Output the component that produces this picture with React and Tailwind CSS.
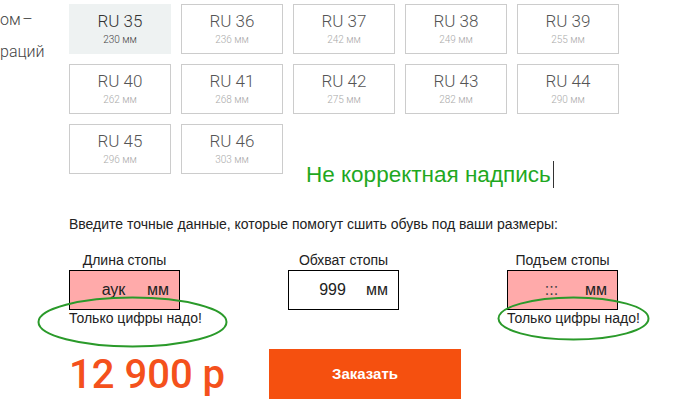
import React from "react";

const sizes = [
  ["RU 35", "230"],
  ["RU 36", "236"],
  ["RU 37", "242"],
  ["RU 38", "249"],
  ["RU 39", "255"],
  ["RU 40", "262"],
  ["RU 41", "268"],
  ["RU 42", "275"],
  ["RU 43", "282"],
  ["RU 44", "290"],
  ["RU 45", "296"],
  ["RU 46", "303"],
];

function Tile({ ru, mm, active }) {
  return (
    <div
      className={
        "h-[50px] flex flex-col items-center border " +
        (active ? "bg-[#eef2f2] border-[#eef2f2]" : "bg-white border-[#cccccc]")
      }
    >
      <div
        className={
          "text-[17px] leading-[20px] mt-[6px] font-light " +
          (active ? "text-[#333]" : "text-[#555]")
        }
      >
        {ru}
      </div>
      <div
        className={
          "text-[10px] leading-[12px] mt-[3px] font-light " +
          (active ? "text-[#444]" : "text-[#aaa]")
        }
      >
        {mm} мм
      </div>
    </div>
  );
}

function Field({ label, value, error, dots }) {
  return (
    <div className="w-[111px] flex flex-col">
      <div className="text-center text-[14px] leading-[16px] text-[#222] h-[16px]">{label}</div>
      <div
        className={
          "mt-[2px] h-[40px] border border-black flex items-center text-[16px] leading-[18px] text-[#222] " +
          (error ? "bg-[#ffaaaa]" : "bg-white")
        }
      >
        <span className={"pl-[10px] w-[77px] text-center " + (dots ? "text-[#444]" : "")}>{value}</span>
        <span>мм</span>
      </div>
      <div className="h-[16px] text-[14px] leading-[16px] text-[#222] whitespace-nowrap">
        {error ? "Только цифры надо!" : ""}
      </div>
    </div>
  );
}

export default function App() {
  return (
    <div
      className="relative w-[697px] h-[408px] bg-white overflow-hidden"
      style={{ fontFamily: "'Liberation Sans', Arial, sans-serif" }}
    >
      <div className="flex">
        <div className="w-[69px] pt-[4px] text-[16px] leading-[32px] text-[#444] font-['Roboto',sans-serif] font-light">
          <div>ом&#8202;–</div>
          <div>раций</div>
        </div>
        <div className="flex-1">
          <div className="pt-[4px] grid grid-cols-[repeat(5,102px)] gap-[10px] items-start font-['Roboto',sans-serif]">
            {sizes.map(([ru, mm], i) => (
              <Tile key={ru} ru={ru} mm={mm} active={i === 0} />
            ))}
            <div className="col-span-3 pl-[13px] mt-[38px] flex items-center">
              <span className="text-[22.5px] leading-[24px] text-[#1fa81f] font-['Liberation_Sans',Arial,sans-serif] whitespace-nowrap">
                Не корректная надпись
              </span>
              <span className="ml-[2px] w-[1px] h-[27px] bg-[#333] -mt-[1px]"></span>
            </div>
          </div>

          <div className="mt-[28px] text-[14px] leading-[16px] text-[#222]">
            Введите точные данные, которые помогут сшить обувь под ваши размеры:
          </div>

          <div className="mt-[20px] flex gap-[108px]">
            <Field label="Длина стопы" value="аук" error />
            <Field label="Обхват стопы" value="999" />
            <Field label="Подъем стопы" value=":::" error dots />
          </div>

          <div className="mt-[23px] flex items-start">
            <div className="w-[200px] h-[50px] text-[40px] leading-[52px] font-medium text-[#f4511c] font-['Roboto',sans-serif] whitespace-nowrap">
              12 900 р
            </div>
            <button className="w-[192px] h-[50px] bg-[#f5500f] text-white font-bold text-[15px]">
              Заказать
            </button>
          </div>
        </div>
      </div>

      <svg className="absolute left-0 top-0 pointer-events-none" width="697" height="408">
        <ellipse cx="132.5" cy="322" rx="94" ry="24.5" fill="none" stroke="#2a9a2a" strokeWidth="2" />
        <ellipse cx="573.5" cy="318.5" rx="75" ry="21" fill="none" stroke="#2a9a2a" strokeWidth="2" />
      </svg>
    </div>
  );
}
